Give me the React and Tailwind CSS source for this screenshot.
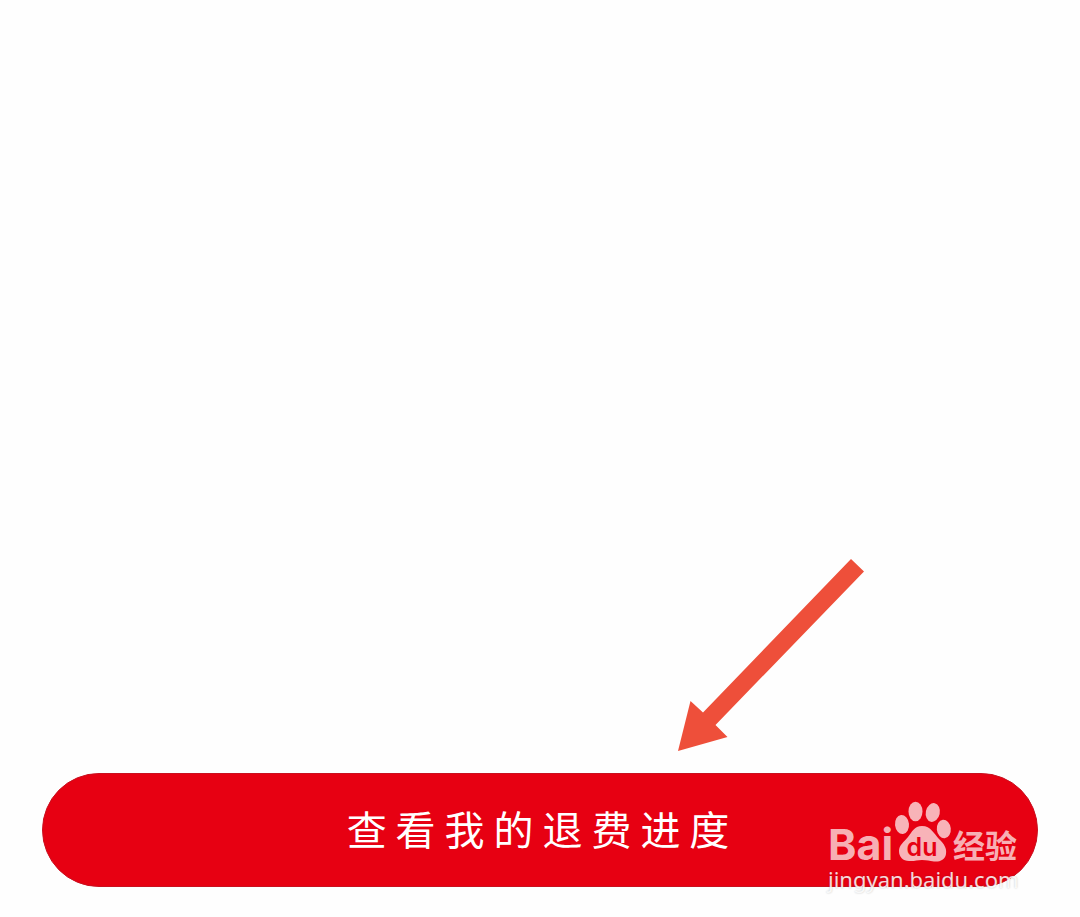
// App.jsx
// -------
// Refund page footer: one wide pill button, a pointer arrow above it and
// the Baidu Jingyan watermark over its right end.

// Arrow that points down-left at the button
function PointerArrow() {
  return (
    <svg
      className="pointer-events-none absolute bottom-full right-[173px] mb-5 h-[196px] w-[188px]"
      viewBox="0 0 188 196"
      aria-hidden="true"
    >
      <path
        d="M174 2 L187 14.500 L38.500 168 L50.500 180 L1 194 L13.500 144 L26 155.500 Z"
        fill="#ee4f3a"
      />
    </svg>
  );
}

function BaiduLogo() {
  return (
    <svg className="-mb-3 h-[76px] w-[200px]" viewBox="0 0 200 76" role="img" aria-label="Baidu经验">
      <g fill="#ffffff" fillOpacity="0.7">
        <text x="0" y="61" fontFamily="Inter, sans-serif" fontSize="43" fontWeight="700">
          Bai
        </text>
        {/* Paw: four toes and the pad */}
        <ellipse cx="74" cy="25.500" rx="7" ry="9.500" transform="rotate(-6 74 25.500)" />
        <ellipse cx="87.500" cy="12.500" rx="7" ry="9.800" />
        <ellipse cx="104.800" cy="13.500" rx="7" ry="9.500" transform="rotate(12 104.800 13.500)" />
        <ellipse cx="115.800" cy="30" rx="7" ry="9.300" transform="rotate(-6 115.800 30)" />
        <path d="M94 27 C103 27 106 35 111 40 C116 45 119 49 118 55 C117 61 112 63 106 62.500 C101 62 99 61 94 61 C89 61 86 62.500 81 62 C75 62 71 58 71 52 C71 46 76 43 80 38 C84 33 86 27 94 27 Z" />
        <text
          x="125"
          y="59"
          fontFamily="'Noto Sans CJK SC', sans-serif"
          fontSize="32"
          fontWeight="700"
        >
          经验
        </text>
      </g>
      <text
        x="94"
        y="57"
        textAnchor="middle"
        fontFamily="Inter, sans-serif"
        fontSize="25"
        fontWeight="600"
        fill="#e70012"
      >
        du
      </text>
    </svg>
  );
}

function Watermark() {
  return (
    <div className="pointer-events-none absolute -bottom-2 right-2 flex w-[202px] flex-col">
      <BaiduLogo />
      <span className="font-['Noto_Sans',sans-serif] text-[22px] leading-8 text-white/85 [text-shadow:0_0_2px_rgba(0,0,0,0.25)]">
        jingyan.baidu.com
      </span>
    </div>
  );
}

export default function App() {
  return (
    <main className="flex min-h-screen flex-col justify-end bg-[#fefefe] px-[42px] pb-[30px]">
      <div className="relative">
        <PointerArrow />
        <button
          type="button"
          className="h-[114px] w-full rounded-full border border-[#c9101f] bg-[#e70012] pb-1 pr-1 font-['Noto_Sans_CJK_SC',sans-serif] text-[40px] font-normal leading-none text-white"
        >
          查 看 我 的 退 费 进 度
        </button>
        <Watermark />
      </div>
    </main>
  );
}
